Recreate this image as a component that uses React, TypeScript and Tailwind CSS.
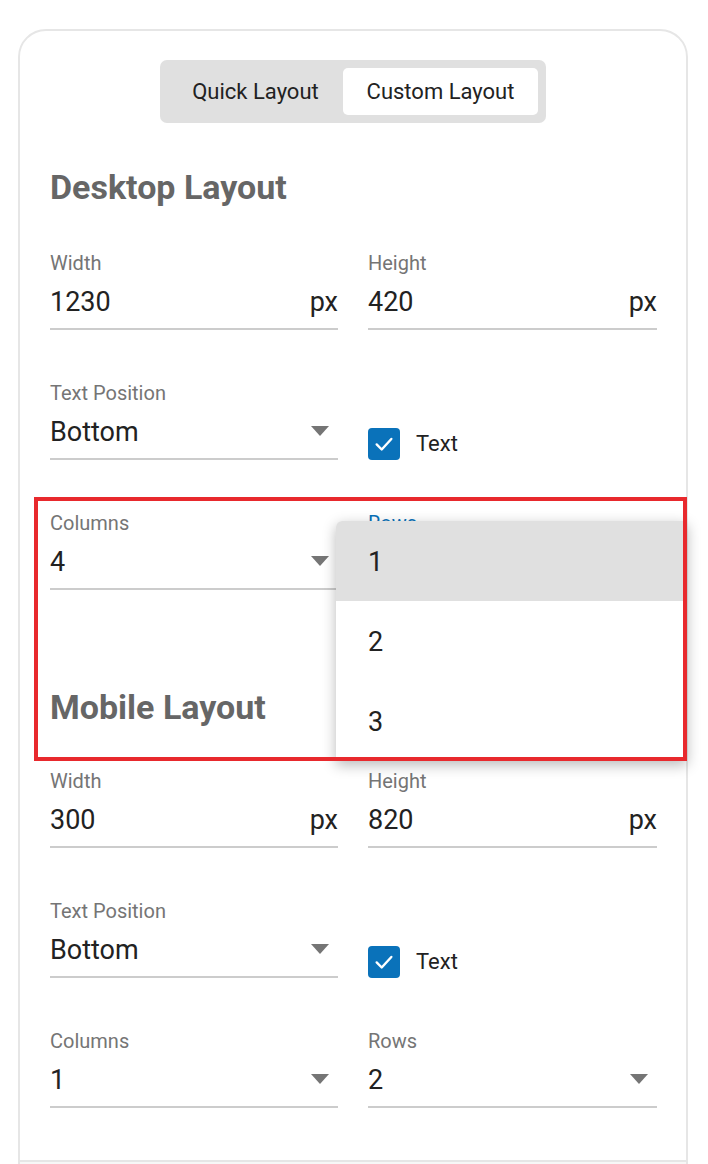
import React from "react";

const font = { fontFamily: "Roboto, 'Noto Sans', sans-serif" };

function Caret() {
  return (
    <svg width="18" height="10" viewBox="0 0 18 10" className="shrink-0">
      <path d="M0 0 L18 0 L9 10 Z" fill="#757575" />
    </svg>
  );
}

function Field({
  label,
  value,
  suffix,
  select,
  labelColor = "text-[#757575]",
}: {
  label: string;
  value: string;
  suffix?: string;
  select?: boolean;
  labelColor?: string;
}) {
  return (
    <div className="flex flex-col">
      <div className={`text-[20px] leading-[22px] h-[22px] whitespace-nowrap ${labelColor}`}>{label}</div>
      <div className="flex items-center h-[56px] border-b-2 border-[#cccccc] pt-[2px]">
        <div className="flex-1 text-[27px] leading-[32px] text-[#222222]">{value}</div>
        {suffix && <div className="text-[27px] leading-[32px] text-[#222222]">{suffix}</div>}
        {select && (
          <div className="pr-[9px] pb-[2px]">
            <Caret />
          </div>
        )}
      </div>
    </div>
  );
}

function CheckField() {
  return (
    <div className="flex items-center gap-[16px] mt-[45px]">
      <div className="w-[32px] h-[32px] rounded-[4px] bg-[#0a72ba] flex items-center justify-center">
        <svg width="22" height="22" viewBox="0 0 24 24">
          <path d="M4 12.5 L9.5 18 L20 6.5" fill="none" stroke="white" strokeWidth="2.6" strokeLinecap="round" strokeLinejoin="round" />
        </svg>
      </div>
      <div className="text-[22px] leading-[26px] text-[#222222]">Text</div>
    </div>
  );
}

function Section({
  title,
  w,
  h,
  cols,
  rows,
  rowsBlue,
  topGap,
}: {
  title: string;
  w: string;
  h: string;
  cols: string;
  rows: string;
  rowsBlue?: boolean;
  topGap: string;
}) {
  return (
    <div className="flex flex-col">
      <div className="text-[34px] leading-[36px] font-bold text-[#666666] whitespace-nowrap">{title}</div>
      <div className={`grid grid-cols-[288px_289px] gap-x-[30px] gap-y-[52px] ${topGap}`}>
        <Field label="Width" value={w} suffix="px" />
        <Field label="Height" value={h} suffix="px" />
        <Field label="Text Position" value="Bottom" select />
        <CheckField />
        <Field label="Columns" value={cols} select />
        <Field
          label="Rows"
          value={rows}
          select
          labelColor={rowsBlue ? "text-[#0a72ba]" : "text-[#757575]"}
        />
      </div>
    </div>
  );
}

export default function App() {
  return (
    <div className="relative w-[708px] h-[1164px] bg-white overflow-hidden" style={font}>
      <div className="ml-[18px] mt-[29px] w-[670px] h-[1200px] border-2 border-[#e6e6e6] rounded-t-[28px] flex flex-col">
        <div className="flex justify-center pt-[29px]">
          <div className="flex items-center w-[386px] h-[63px] p-[8px] bg-[#e0e0e0] rounded-[7px]">
            <div className="w-[175px] h-[47px] flex items-center justify-center text-[22px] text-[#222222] whitespace-nowrap">
              Quick Layout
            </div>
            <div className="w-[195px] h-[47px] flex items-center justify-center text-[22px] text-[#222222] bg-white rounded-[5px] whitespace-nowrap">
              Custom Layout
            </div>
          </div>
        </div>
        <div className="pl-[30px] pr-[29px] pt-[46px] flex flex-col">
          <Section title="Desktop Layout" w="1230" h="420" cols="4" rows="1" rowsBlue topGap="mt-[47px]" />
          <div className="h-[99px]" />
          <Section title="Mobile Layout" w="300" h="820" cols="1" rows="2" topGap="mt-[45px]" />
        </div>
        <div className="mt-[52px] border-t-2 border-[#e6e6e6] bg-[#f7f7f7] flex-1" />
      </div>

      {/* Dropdown menu overlay */}
      <div className="absolute left-[336px] top-[521px] w-[351px] bg-white rounded-tl-[6px] shadow-[0_4px_14px_rgba(0,0,0,0.28)] flex flex-col overflow-hidden">
        <div className="h-[80px] bg-[#e0e0e0] flex items-center pl-[32px] pt-[2px] text-[27px] text-[#222222]">1</div>
        <div className="h-[80px] flex items-center pl-[32px] pt-[2px] text-[27px] text-[#222222]">2</div>
        <div className="h-[80px] flex items-center pl-[32px] pt-[2px] text-[27px] text-[#222222]">3</div>
      </div>

      {/* Highlight box */}
      <div className="absolute left-[34px] top-[497px] w-[653px] h-[264px] border-4 border-[#e8292d] pointer-events-none" />
    </div>
  );
}
